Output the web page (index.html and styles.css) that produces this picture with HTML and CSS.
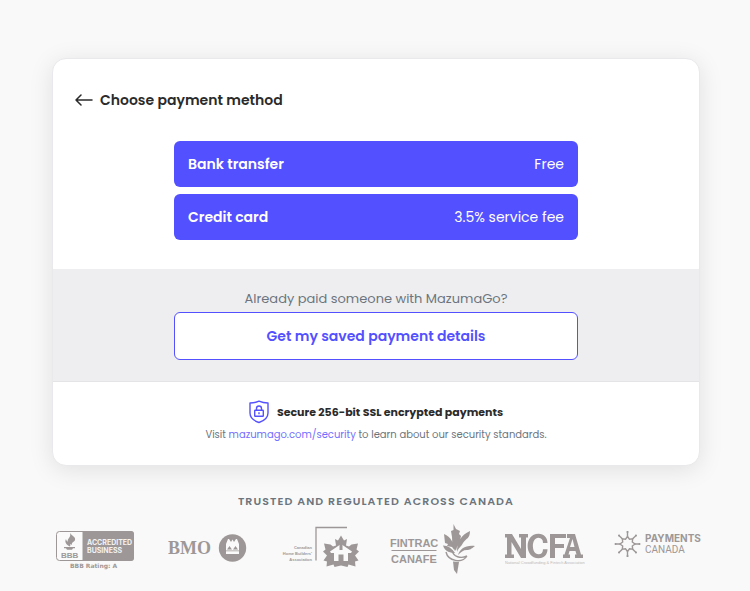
FILE: index.html
```html
<!DOCTYPE html>
<html lang="en">
<head>
<meta charset="utf-8">
<meta name="viewport" content="width=device-width, initial-scale=1">
<title>Choose payment method</title>
<link rel="stylesheet" href="styles.css">
</head>
<body>
<main class="page">
  <section class="card">
    <div class="choose">
      <header class="heading">
        <button class="back" type="button" aria-label="Back">
          <svg width="18" height="12" viewBox="0 0 18 12"><path d="M6 1 1 6l5 5M1 6h16" fill="none" stroke="currentColor" stroke-width="1.5" stroke-linecap="round" stroke-linejoin="round"/></svg>
        </button>
        <h1 class="title">Choose payment method</h1>
      </header>
      <div class="methods">
        <button class="method" type="button"><span class="method-name">Bank transfer</span><span>Free</span></button>
        <button class="method" type="button"><span class="method-name">Credit card</span><span>3.5% service fee</span></button>
      </div>
    </div>
    <div class="saved">
      <p class="saved-text">Already paid someone with MazumaGo?</p>
      <button class="saved-button" type="button">Get my saved payment details</button>
    </div>
    <footer class="security">
      <p class="secure-line">
        <svg width="20" height="24" viewBox="0 0 20 24" fill="none" stroke="#5551ff" stroke-width="1.4" stroke-linejoin="round"><path d="M10 1.2C7.500 2.300 4 3 1 3v10c0 5 4 7.800 9 9.500 5-1.700 9-4.500 9-9.500V3c-3 0-6.500-.7-9-1.800Z"/><rect x="5.700" y="10.300" width="8.600" height="6" rx=".5"/><path d="M7.500 10.300V8.500a2.500 2.500 0 0 1 5 0v1.800M10 12.300v2"/></svg>
        <strong>Secure 256-bit SSL encrypted payments</strong>
      </p>
      <p class="visit">Visit <a href="#security">mazumago.com/security</a> to learn about our security standards.</p>
    </footer>
  </section>
  <section class="trust">
    <h2 class="trust-title">TRUSTED AND REGULATED ACROSS CANADA</h2>
    <div class="logos">
      <svg class="logo" viewBox="-5 0 100 60" role="img" aria-label="BBB accredited business">
        <rect x="6.500" y="11.500" width="77" height="29" rx="3" fill="#fafafa" stroke="#9d9897"/>
        <path d="M32.500 11H81q3 0 3 3v24q0 3-3 3H32.500Z"/>
        <path d="M20 13c2 3 6 4 5 7-.5 2-4 2.500-3 5-4-2-5-3.500-4-5.500s3-3 2-6.500ZM16 19c0 3 6 3.500 4 7.500-3-1.500-6-4-4-7.500ZM14 27h11v1.200h-2l-1 1.600h-5l-1-1.600h-2Z"/>
        <text x="11" y="38" class="sans bold" font-size="8">BBB</text>
        <g fill="#f3f2f2"><text x="37" y="25" class="inter bold" font-size="7">ACCREDITED</text><text x="37" y="33" class="inter bold" font-size="7">BUSINESS</text></g>
        <text x="20" y="48" class="dejavu bold" font-size="6">BBB Rating: A</text>
      </svg>
      <svg class="logo" viewBox="2 0 100 60" role="img" aria-label="BMO">
        <text x="13" y="34" class="serif bold" font-size="18">BMO</text>
        <circle cx="77.500" cy="28" r="13.700"/>
        <path fill="#fafafa" fill-rule="evenodd" d="M71 34V24l2-5h1l2 3 1.500-2.500L79 22l2-3h1l2 5v10ZM72 29.500h5l-2.500-3.500ZM78 29.500h5l-2.500-3.500ZM71 31.200h13v-.8H71Z"/>
      </svg>
      <svg class="logo" viewBox="-5 0 100 60" role="img" aria-label="Canadian Home Builders' Association">
        <path d="M41 40.500V7.500h31" fill="none" stroke="#9d9897" stroke-width="1.300"/>
        <g class="sans bold right" font-size="4"><text x="37" y="29">Canadian</text><text x="37" y="35">Home Builders'</text><text x="37" y="41">Association</text></g>
        <path d="M66 15.500l3 5 3-1.500-1 6.500 3 1 2.500-2 6.500-1-1.500 6 2.500 2-4 4 3.500 5-3.500 1 .5 5-7-2-1 2.500-6.500-1.500-6.500 1.500-1-2.500-7 2 .5-5-3.500-1 3.500-5-4-4 2.500-2-1.500-6 6.500 1 2.500 2 3-1-1-6.500 3 1.500Z"/>
        <path fill="#fafafa" d="M66 24l11 7.500-1 1.500h-3v8h-4.500v-6.500h-5V41H59v-8h-3l-1-1.500Z"/>
        <path d="M64.500 24h3v6h-3Z"/>
      </svg>
      <svg class="logo" viewBox="-3 0 100 60" role="img" aria-label="FINTRAC CANAFE">
        <text x="5" y="27" class="sans bold" font-size="11">FINTRAC</text>
        <path d="M6.500 30.500h45" stroke="#9d9897"/>
        <text x="6" y="43" class="sans bold" font-size="11">CANAFE</text>
        <path d="M68.500 4l2.500 5 4 2-1 3 2 2c-1 6-4 9-5 15-3-4-4-8-4-14l-1-6 2.500-1ZM59 14c7 3 10 9 11 17l-3-4-5-1 1-2-3-1ZM58 25.500c5 0 9 3 12 7.500-4 0-10-1-12-7.500ZM85 11c0 8-4 7-7 12-2 4-4 4-6 9 0-10 4-17 13-21ZM90 26c-4 3-5 4-8 4-4 0-6 2-9 5 2-6 7-10 17-9Z"/>
        <path d="M61 32c2 9 16 12 21 4M67 30c1 7 9 9 15 6" fill="none" stroke="#9d9897" stroke-width="1.400"/>
        <path d="M68 41.500l6 .5-2 12-3-4Z"/>
      </svg>
      <svg class="logo" viewBox="-5 0 100 60" role="img" aria-label="NCFA">
        <path fill-rule="evenodd" d="M6 14h7l9 15V17.500h-2V14h9v3.500h-2V38h-5L12.500 22v12.500H15V38H6v-3.500h2v-17H6ZM48.500 23H44c0-3-1.500-5.200-4.500-5.200-7.500 0-7.500 16.400 0 16.400 3 0 4.500-2 4.500-5h4.500c0 5.800-4 9-9 9-14.500 0-14.500-24.400 0-24.400 5.500 0 9 4 9 9.200ZM51 14h16v4H56v6h9v4h-9v10h-5ZM68 14h8l6 20.500h2V38h-8v-3.500h1.500l-1-3.500h-6l-1 3.500H71V38h-7v-3.500h1.500L71 18h-3ZM71 27h4.500l-2-8Z"/>
        <text x="6" y="44" class="sans" font-size="4" opacity=".65">National Crowdfunding &amp; Fintech Association</text>
      </svg>
      <svg class="logo" viewBox="-3 0 100 60" role="img" aria-label="Payments Canada">
        <g fill="none" stroke="#9d9897" stroke-width="1.400"><path d="M17.500 11v5.500M17.500 37v-5.500M5 24h5M30 24h-5M8.700 15.200l3.600 3.600M26.300 15.200l-3.600 3.600M8.700 32.800l3.600-3.600M26.300 32.800l-3.600-3.600"/><path d="M17.500 16.500l2 2.700 3.200-.4-.4 3.200 2.700 2-2.700 2 .4 3.200-3.200-.4-2 2.700-2-2.700-3.200.4.400-3.200-2.700-2 2.700-2-.4-3.200 3.200.4Z"/></g>
        <circle cx="17.500" cy="12" r="1"/><circle cx="17.500" cy="36" r="1"/><circle cx="5.500" cy="24" r="1"/><circle cx="29.500" cy="24" r="1"/><circle cx="9" cy="15.500" r="1"/><circle cx="26" cy="15.500" r="1"/><circle cx="9" cy="32.500" r="1"/><circle cx="26" cy="32.500" r="1"/>
        <text x="35" y="22" class="inter bold" font-size="10">PAYMENTS</text>
        <text x="35" y="33" class="roboto" font-size="10">CANADA</text>
      </svg>
    </div>
  </section>
</main>
</body>
</html>
```

FILE: styles.css
```css
* { box-sizing: border-box; }

body {
  margin: 0;
  background: #f9f9f9;
  color: #2b2b2b;
  font-family: Poppins, Inter, sans-serif;
}

h1, h2, p { margin: 0; }

button {
  font-family: inherit;
  cursor: pointer;
}

.page { padding: 58px 50px 8px 52px; }

.card {
  overflow: hidden;
  background: #fff;
  border: 1px solid #e9e9ec;
  border-radius: 14px;
  box-shadow: 0 4px 24px rgba(0, 0, 0, 0.1);
}

.choose { padding: 28px 22px 29px; }

.heading {
  display: flex;
  align-items: center;
  gap: 7px;
  height: 26px;
}

.back {
  display: flex;
  padding: 0;
  border: 0;
  background: none;
  color: #2b2b2b;
}

.title {
  font-size: 14px;
  line-height: 24px;
  font-weight: 600;
}

.methods {
  display: flex;
  flex-direction: column;
  gap: 7px;
  max-width: 404px;
  margin: 28px auto 0;
}

.method {
  display: flex;
  align-items: center;
  justify-content: space-between;
  padding: 11px 14px;
  border: 0;
  border-radius: 6px;
  background: #5350ff;
  color: #fff;
  font-size: 14px;
  line-height: 24px;
}

.method-name { font-weight: 600; }

.saved {
  padding: 20px 22px 21px;
  background: #eeeef1;
  border-bottom: 1px solid #e4e4e7;
  text-align: center;
}

.saved-text {
  color: #6c757d;
  font-size: 13px;
  line-height: 20px;
}

.saved-button {
  display: block;
  width: 100%;
  max-width: 404px;
  margin: 3px auto 0;
  padding: 11px 14px;
  border: 1px solid #5350ff;
  border-radius: 6px;
  background: #fff;
  color: #5350ff;
  font-size: 14px;
  line-height: 24px;
  font-weight: 600;
}

.security {
  padding: 18px 22px 19px;
  text-align: center;
}

.secure-line {
  display: flex;
  align-items: center;
  justify-content: center;
  gap: 8px;
  font-size: 11px;
  line-height: 24px;
}

.visit {
  color: #6c757d;
  font-size: 10px;
  line-height: 22px;
}

.visit a {
  color: #726fff;
  text-decoration: none;
}

.trust { padding-top: 26px; }

.trust-title {
  color: #6c757d;
  font-size: 11px;
  line-height: 18px;
  font-weight: 600;
  letter-spacing: 0.1em;
  text-align: center;
}

.logos {
  display: grid;
  grid-template-columns: repeat(6, 1fr);
  justify-items: center;
  margin: 10px -13px 0;
}

.logo {
  width: 100px;
  height: 60px;
  fill: #9d9897;
}

.sans { font-family: "Liberation Sans", sans-serif; }
.serif { font-family: "Liberation Serif", serif; }
.inter { font-family: Inter, sans-serif; }
.dejavu { font-family: "DejaVu Sans", sans-serif; }
.roboto { font-family: Roboto, sans-serif; }
.bold { font-weight: 700; }
.right { text-anchor: end; }
```
